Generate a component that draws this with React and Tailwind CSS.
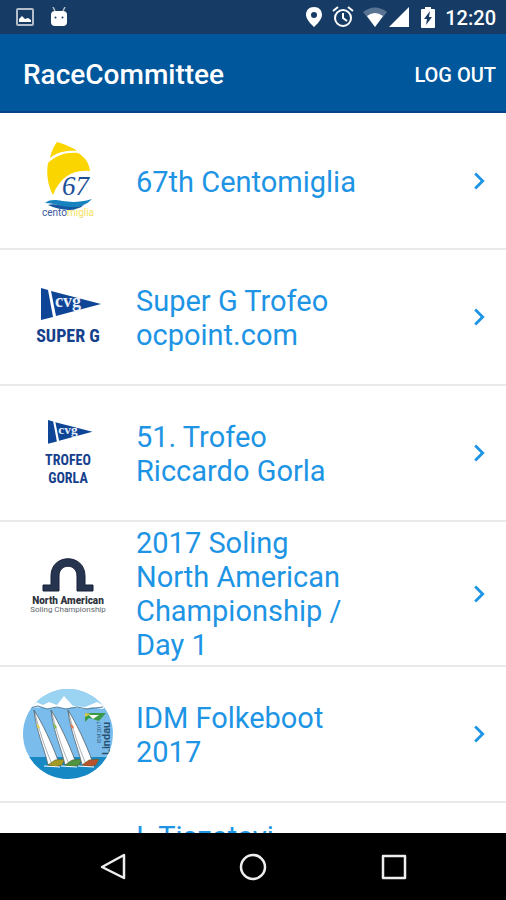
import { MdChevronRight } from 'react-icons/md';

const CentomigliaLogo = () => (
    <svg viewBox="0 0 90 90" className="w-full" role="img" aria-label="Centomiglia">
        <path d="M27 22 C28 16 31 10 34 6 C43 9 49 11 54 15 C44 14 34 16 27 22Z" fill="#fbd500" />
        <path d="M25 27 C33 19 44 16 55 17 C62 21 66 27 67 35 C50 33 37 41 30 59 C25 50 23 38 25 27Z" fill="#fbd500" />
        <text x="39" y="59" fontSize="27" fontStyle="italic" fill="#1c4f96" fontFamily="Liberation Serif, serif">67</text>
        <path d="M22 67 C33 59 42 71 69 63 C61 72 47 73 38 70 C32 68 27 67 22 67Z" fill="#1683c0" />
        <path d="M25 69 C34 66 42 75 61 69 C52 77 36 74 25 69Z" fill="#14599f" />
        <text x="19" y="80" fontSize="10" fill="#3c5aa0" fontFamily="Roboto, sans-serif">
            cento<tspan fill="#f3df5e">miglia</tspan>
        </text>
    </svg>
);

const Pennant = () => (
    <>
        <path d="M0 0 L7 2 L12 29 L0 32Z" fill="#0e4597" />
        <path d="M10 3 L60 16 L15 28Z" fill="#0e4597" />
        <text x="14" y="19" fontSize="18" fontWeight="700" fill="#e8effa" fontFamily="Liberation Serif, serif">cvg</text>
    </>
);

const SuperGLogo = () => (
    <svg viewBox="0 0 90 90" className="w-full" role="img" aria-label="Super G">
        <g transform="translate(18 16)">
            <Pennant />
        </g>
        <text x="45" y="70" textAnchor="middle" fontSize="18" fontWeight="700" fill="#15408c" fontFamily="Roboto Condensed, Liberation Sans Narrow, sans-serif">SUPER G</text>
    </svg>
);

const GorlaLogo = () => (
    <svg viewBox="0 0 90 90" className="w-full" role="img" aria-label="Trofeo Gorla">
        <g transform="translate(25 12) scale(0.74)">
            <Pennant />
        </g>
        <text x="45" y="57" textAnchor="middle" fontSize="14" fontWeight="700" fill="#15408c" fontFamily="Roboto Condensed, Liberation Sans Narrow, sans-serif">TROFEO</text>
        <text x="45" y="75" textAnchor="middle" fontSize="14" fontWeight="700" fill="#15408c" fontFamily="Roboto Condensed, Liberation Sans Narrow, sans-serif">GORLA</text>
    </svg>
);

const SolingLogo = () => (
    <svg viewBox="0 0 90 90" className="w-full" role="img" aria-label="North American Soling Championship">
        <path
            d="M20 36 H28 V27 C28 4 62 4 62 27 V36 H70 V42 H54 V27 C54 14 36 14 36 27 V42 H20Z"
            fill="#26344f"
            stroke="#17213a"
            strokeWidth="1"
        />
        <text x="45" y="55" textAnchor="middle" fontSize="10" fontWeight="900" fill="#303540" fontFamily="Roboto, sans-serif">North American</text>
        <text x="45" y="63" textAnchor="middle" fontSize="8" fill="#62666e" fontFamily="Roboto, sans-serif">Soling Championship</text>
    </svg>
);

const Sailboat = ({ x, hull, mark }) => (
    <g transform={`translate(${x} 0)`}>
        <path d="M0 21 C8 34 17 52 25 74 L14 76 C11 61 2 42 0 21Z" fill="#fff" stroke="#56636b" strokeWidth="0.8" />
        <path d="M0 21 C5 40 10 57 18 75" fill="none" stroke="#56636b" strokeWidth="0.5" />
        <path d="M2 34 L6 38 L4 40Z" fill={mark} />
        <path d="M14 76 L21 71 L31 70 L28 76 Q21 79 14 76Z" fill={hull} stroke="#5c6030" strokeWidth="0.6" />
        <path d="M10 77 L26 78" stroke="#fff" strokeWidth="1" />
    </g>
);

const FolkebootLogo = () => (
    <svg viewBox="0 0 90 90" className="w-full" role="img" aria-label="Lindau Folkeboot">
        <clipPath id="lake">
            <circle cx="45" cy="45" r="45" />
        </clipPath>
        <g clipPath="url(#lake)">
            <rect width="90" height="90" fill="#7abdec" />
            <rect width="90" height="19" fill="#9bd3f2" />
            <path
                d="M0 19 L13 13 L20 16 L26 13 L34 16 L41 7 L50 17 L62 18 L74 13 L84 18 L79 20 L69 18 L62 20 L50 18 L42 20 L35 18 L26 20 L18 18Z"
                fill="#fff"
            />
            <path d="M7 19 L15 17 L24 20 L34 18 L43 20 L54 18 L64 20 L80 18" fill="none" stroke="#56809c" strokeWidth="1" />
            <rect y="68" width="90" height="22" fill="#1689c4" />
            <Sailboat x={11} hull="#a49b25" mark="#dfd64b" />
            <Sailboat x={28} hull="#4f9440" mark="#85bd44" />
            <Sailboat x={45} hull="#b8532d" mark="#ed714a" />
            <path d="M62 24 H83 L76 32 L66 29 L62 33Z" fill="#3a9a48" />
            <path d="M66 26 H76 L70 30Z" fill="#fff" />
            <path d="M62 24 L68 25 L62 28Z" fill="#d7c84a" />
            <g transform="translate(87 66) rotate(-90)">
                <text fontSize="11" fontWeight="700" fill="#285071" fontFamily="Roboto, sans-serif">Lindau</text>
            </g>
            <g transform="translate(78 54) rotate(-90)">
                <text fontSize="5" fill="#285071" fontFamily="Roboto, sans-serif">IDM 2017</text>
            </g>
        </g>
    </svg>
);

const events = [
    { name: '67th Centomiglia', logo: <CentomigliaLogo /> },
    { name: 'Super G Trofeo ocpoint.com', logo: <SuperGLogo /> },
    { name: '51. Trofeo Riccardo Gorla', logo: <GorlaLogo /> },
    { name: '2017 Soling North American Championship / Day 1', logo: <SolingLogo /> },
    { name: 'IDM Folkeboot 2017', logo: <FolkebootLogo /> },
];

const StatusBar = () => (
    <div className="flex h-[34px] shrink-0 items-center justify-between bg-[#163c66] pr-[10px] pl-4 text-white">
        <div className="flex items-center gap-4">
            <svg viewBox="0 0 18 18" className="size-[18px]">
                <rect x="1" y="1" width="16" height="16" rx="1" fill="none" stroke="#b4bec8" strokeWidth="2" />
                <path d="M3 14 V11 L6 8 L9 11 L12 10 L15 12 V14Z" fill="#fff" />
            </svg>
            <svg viewBox="0 0 18 20" className="h-5 w-[18px]">
                <path d="M3 0 L5 4 M15 0 L13 4" stroke="#b4bec8" strokeWidth="1.5" />
                <path d="M1 8 Q1 4 5 4 H13 Q17 4 17 8 V15 Q17 19 13 19 H5 Q1 19 1 15Z" fill="#fff" />
                <circle cx="5.5" cy="10.5" r="1" fill="#163c66" />
                <circle cx="12.5" cy="10.5" r="1" fill="#163c66" />
            </svg>
        </div>
        <div className="flex items-center">
            <svg viewBox="0 0 16 20" className="h-5 w-4">
                <path d="M8 0 C3 0 0 3 0 8 C0 13 8 20 8 20 C8 20 16 13 16 8 C16 3 13 0 8 0Z M8 5 A3 3 0 1 1 8 11 A3 3 0 1 1 8 5Z" fill="#fff" fillRule="evenodd" />
            </svg>
            <svg viewBox="0 0 22 22" className="ml-[10px] size-[22px]" fill="none" stroke="#fff" strokeWidth="2">
                <circle cx="11" cy="12" r="8" />
                <path d="M11 7 V12 L15 15 M1 5 L6 1 M21 5 L16 1" />
            </svg>
            <svg viewBox="0 0 26 20" className="ml-2 h-5 w-[26px]">
                <path d="M1 5 Q13 -4 25 5 L13 20Z" fill="#597493" />
                <path d="M5 9 Q13 3 21 9 L13 20Z" fill="#fff" />
            </svg>
            <svg viewBox="0 0 20 20" className="ml-px size-5">
                <path d="M20 0 V20 H0Z" fill="#fff" />
            </svg>
            <svg viewBox="0 0 14 21" className="ml-3 h-[21px] w-[14px]">
                <path d="M4 0 H10 V2 H13 Q14 2 14 3 V20 Q14 21 13 21 H1 Q0 21 0 20 V3 Q0 2 1 2 H4Z" fill="#fff" />
                <path d="M9 4 L3 12 H6 L5 18 L11 10 H8Z" fill="#163c66" />
            </svg>
            <span className="ml-[10px] pt-[2px] text-[20px] leading-6 font-medium">12:20</span>
        </div>
    </div>
);

const EventRow = ({ name, logo }) => (
    <li className="border-b-2 border-[#e9e9e9]">
        <button type="button" className="flex min-h-[134px] w-full items-center pr-[10px] pl-[23px] text-left">
            <span className="w-[90px] shrink-0">{logo}</span>
            <span className="ml-[23px] flex-1 pt-1 pr-[106px] pb-[3px] text-[29px] leading-[34px] text-[#1d94e4]">{name}</span>
            <MdChevronRight className="size-[34px] shrink-0 text-[#1d94e4]" />
        </button>
    </li>
);

const NavBar = () => (
    <nav className="flex h-[67px] shrink-0 items-center justify-around bg-black px-[43px]">
        <button type="button" aria-label="Back">
            <svg viewBox="0 0 28 28" className="size-7" fill="none" stroke="#eee" strokeWidth="2.5" strokeLinejoin="round">
                <path d="M25 2 V25 L3 14Z" />
            </svg>
        </button>
        <button type="button" aria-label="Home">
            <svg viewBox="0 0 28 28" className="size-7" fill="none" stroke="#eee" strokeWidth="2.5">
                <circle cx="14" cy="14" r="12" />
            </svg>
        </button>
        <button type="button" aria-label="Recent apps">
            <svg viewBox="0 0 28 28" className="size-7" fill="none" stroke="#eee" strokeWidth="2.5" strokeLinejoin="round">
                <rect x="4" y="3" width="22" height="22" />
            </svg>
        </button>
    </nav>
);

const App = () => {
    return (
        <div className="flex h-screen flex-col bg-white font-[Roboto,sans-serif]">
            <StatusBar />

            {/* App bar */}
            <header className="flex h-[79px] shrink-0 items-center justify-between border-b-2 border-[#064087] bg-[#00579c] pt-1 pr-[10px] pl-[23px] text-white">
                <h1 className="text-[28px] font-medium">RaceCommittee</h1>
                <button type="button" className="text-[20px] font-medium">LOG OUT</button>
            </header>

            {/* Event list */}
            <ul className="min-h-0 flex-1 overflow-hidden pt-px">
                {events.map((event) => (
                    <EventRow key={event.name} name={event.name} logo={event.logo} />
                ))}
                <li>
                    <button type="button" className="w-full pt-[17px] pr-4 pl-[136px] text-left text-[29px] leading-[34px] text-[#1d94e4]">
                        I. Tiszatavi
                    </button>
                </li>
            </ul>

            <NavBar />
        </div>
    );
};

export default App;
